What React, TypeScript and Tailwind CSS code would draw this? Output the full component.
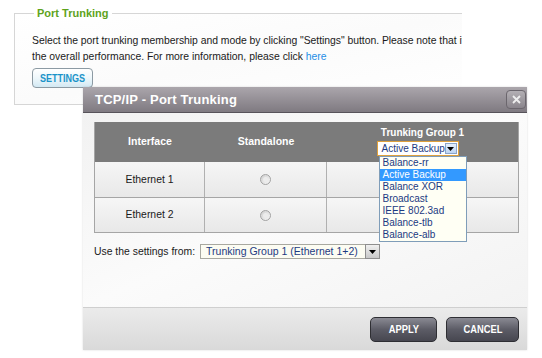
import React from "react";

const modes = ["Balance-rr", "Active Backup", "Balance XOR", "Broadcast", "IEEE 802.3ad", "Balance-tlb", "Balance-alb"];

function Arrow() {
  return (
    <svg width="7" height="4" viewBox="0 0 7 4">
      <path d="M0 0h7L3.5 4z" fill="#000" />
    </svg>
  );
}

function Radio() {
  return (
    <div className="w-[11px] h-[11px] rounded-full border border-[#a2a2a2] bg-gradient-to-br from-[#cfcfcf] to-[#f7f7f7] flex items-center justify-center">
      <div className="w-[5px] h-[5px] rounded-full bg-[#ececec]" />
    </div>
  );
}

function DarkButton({ label, width }: { label: string; width: string }) {
  return (
    <button
      className={`${width} h-[25px] rounded-[5px] border border-[#2e2e33] bg-gradient-to-b from-[#8a8a93] via-[#5c5c66] to-[#474750] text-white font-bold text-[11px] flex items-center justify-center`}
    >
      <span className="inline-block scale-x-[0.85]">{label}</span>
    </button>
  );
}

export default function App() {
  return (
    <div className="relative w-[542px] h-[358px] overflow-hidden bg-white font-['Liberation_Sans',Arial,sans-serif] text-[#1a1a1a]">
      {/* Background page section */}
      <fieldset className="mt-[6px] ml-[14px] w-[448px] min-w-0 h-[99px] overflow-hidden border border-r-0 border-[#d6d6d6] pl-[17px] bg-gradient-to-br from-white via-[#fbfbfb] to-white">
        <legend className="ml-[2px] px-[3px] text-[11px] leading-[15px] font-bold text-[#5ea31c]">
          Port Trunking
        </legend>
        <div className="pt-[12px] text-[10.4px] leading-[16px] whitespace-nowrap">
          <p className="tracking-[-0.03px]">Select the port trunking membership and mode by clicking "Settings" button. Please note that it may affect</p>
          <p>
            the overall performance. For more information, please click{" "}
            <span className="text-[#1f8ee6]">here</span>
          </p>
        </div>
        <button className="mt-[3px] h-[20px] w-[61px] rounded-[4px] border border-[#8c9aa3] bg-gradient-to-b from-white via-[#eef7fb] to-[#d3e9f3] text-[11px] font-bold text-[#1b93c9] flex items-center justify-center">
          <span className="inline-block scale-x-[0.82]">SETTINGS</span>
        </button>
      </fieldset>

      {/* Dialog */}
      <div className="absolute left-[83px] top-[87px] w-[444px] h-[263px] flex flex-col shadow-[0_0_2px_rgba(0,0,0,0.15)]">
        <div className="h-[26px] flex items-center justify-between pl-[12px] pr-[1px] bg-gradient-to-b from-[#aba6ac] to-[#7f7a81] border-b border-[#57535a]">
          <span className="text-[13px] font-bold text-white tracking-[0.2px]">TCP/IP - Port Trunking</span>
          <div className="w-[20px] h-[19px] rounded-[4px] border border-[#6b666d] bg-gradient-to-b from-[#b3afb4] to-[#8a858c] flex items-center justify-center">
            <svg width="9" height="9" viewBox="0 0 9 9">
              <path d="M1 1l7 7M8 1L1 8" stroke="#eeeeee" strokeWidth="1.8" />
            </svg>
          </div>
        </div>

        <div className="flex-1 bg-gradient-to-br from-[#f2f2f2] via-[#fbfbfb] to-[#f3f3f3] pl-[11px] pt-[9px]">
          <div className="w-[425px] border-x border-b border-[#a5a5a5]">
            {/* Header */}
            <div className="h-[40px] bg-[#7b7b7b] grid grid-cols-[110px_122px_1fr] text-white font-bold text-[10.5px]">
              <div className="flex items-center justify-center">Interface</div>
              <div className="flex items-center justify-center">Standalone</div>
              <div className="flex flex-col items-center pt-[4px]">
                <span className="leading-[13px] text-[10px]">Trunking Group 1</span>
                <div className="relative mt-[2px] mr-[10px] w-[82px] h-[15px] border border-[#dea03c] bg-white flex items-center justify-between pl-[4px] pr-[1px] text-[10px] font-normal text-[#1c3a82] whitespace-nowrap">
                  <span>Active Backup</span>
                  <div className="w-[12px] h-[11px] border border-[#8aa4c8] bg-gradient-to-b from-[#e6f0fc] to-[#bdd4f2] flex items-center justify-center">
                    <Arrow />
                  </div>
                  <div className="absolute left-[1px] top-full mt-[1px] w-[88px] z-10 border border-[#7f9db9] bg-[#fffff4]">
                    {modes.map((m) => (
                      <div
                        key={m}
                        className={`h-[12px] leading-[12px] pl-[3px] ${m === "Active Backup" ? "bg-[#3399ff] text-white" : "text-[#1c3a82]"}`}
                      >
                        {m}
                      </div>
                    ))}
                  </div>
                </div>
              </div>
            </div>
            {/* Rows */}
            {["Ethernet 1", "Ethernet 2"].map((name, i) => (
              <div
                key={name}
                className={`h-[35px] grid grid-cols-[110px_122px_1fr] bg-gradient-to-b from-[#f6f6f6] to-[#e8e8e8] text-[10.4px] ${i > 0 ? "border-t border-[#a5a5a5]" : ""}`}
              >
                <div className="flex items-center justify-center border-r border-[#b0b0b0]">{name}</div>
                <div className="flex items-center justify-center border-r border-[#b0b0b0]">
                  <Radio />
                </div>
                <div />
              </div>
            ))}
          </div>

          <div className="mt-[11px] flex items-center gap-[5px] text-[10.4px]">
            <span>Use the settings from:</span>
            <div className="w-[180px] h-[15px] border border-[#a8a8a0] bg-[#fcfcf2] flex items-center justify-between pl-[5px] text-[10.5px] text-[#1c3a82] whitespace-nowrap">
              <span>Trunking Group 1 (Ethernet 1+2)</span>
              <div className="w-[15px] h-[15px] -mr-px border border-[#8e8e8e] bg-gradient-to-b from-[#f0f0f0] to-[#c8c8c8] flex items-center justify-center">
                <Arrow />
              </div>
            </div>
          </div>
        </div>

        <div className="h-[43px] border-t border-[#cfcfcf] bg-gradient-to-b from-[#ebebeb] to-[#d9d9d9] flex items-center justify-end gap-[9px] pr-[8px]">
          <DarkButton label="APPLY" width="w-[67px]" />
          <DarkButton label="CANCEL" width="w-[73px]" />
        </div>
      </div>
    </div>
  );
}
